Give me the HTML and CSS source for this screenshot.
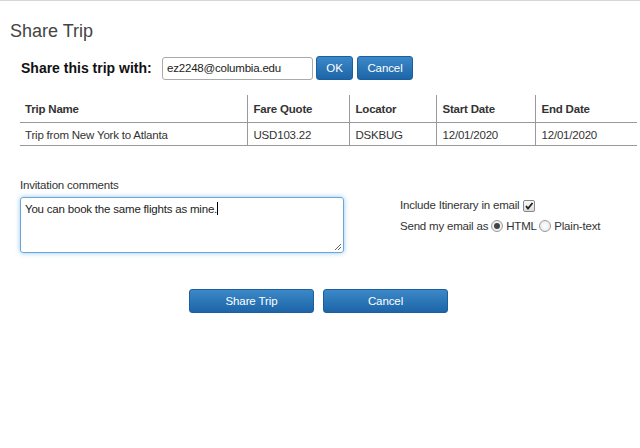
FILE: index.html
```html
<!DOCTYPE html>
<html>
<head>
<meta charset="utf-8">
<link rel="stylesheet" href="styles.css">
</head>
<body>
<div class="page">
  <h1 class="title">Share Trip</h1>
  <div class="share-row">
    <span class="share-label">Share this trip with:</span>
    <div class="email-input">ez2248@columbia.edu</div>
    <button class="btn btn-ok">OK</button>
    <button class="btn btn-cancel-sm">Cancel</button>
  </div>
  <table class="trips">
    <colgroup>
      <col class="c1"><col class="c2"><col class="c3"><col class="c4"><col class="c5">
    </colgroup>
    <thead>
      <tr><th>Trip Name</th><th>Fare Quote</th><th>Locator</th><th>Start Date</th><th>End Date</th></tr>
    </thead>
    <tbody>
      <tr><td>Trip from New York to Atlanta</td><td>USD103.22</td><td>DSKBUG</td><td>12/01/2020</td><td>12/01/2020</td></tr>
    </tbody>
  </table>
  <div class="comments">
    <div class="comments-left">
      <div class="comments-label">Invitation comments</div>
      <div class="textarea">You can book the same flights as mine.<span class="caret"></span>
        <svg class="grip" width="9" height="9" viewBox="0 0 9 9"><path d="M8 2 L2 8 M8 5 L5 8" stroke="#666" stroke-width="1" fill="none"/></svg>
      </div>
    </div>
    <div class="options">
      <div class="opt-line">Include Itinerary in email <span class="checkbox"><svg width="10" height="10" viewBox="0 0 10 10"><path d="M2 5 L4 7.5 L8.5 2" stroke="#222" stroke-width="1.8" fill="none"/></svg></span></div>
      <div class="opt-line">Send my email as <span class="radio checked"></span> HTML <span class="radio"></span> Plain-text</div>
    </div>
  </div>
  <div class="actions">
    <button class="btn btn-big">Share Trip</button>
    <button class="btn btn-big">Cancel</button>
  </div>
</div>
</body>
</html>
```
FILE: styles.css
```css
html, body {
  margin: 0;
  padding: 0;
  background: #fff;
}
body {
  font-family: "Liberation Sans", Arial, sans-serif;
  color: #333;
  border-top: 1px solid #d6d6d6;
}
.page {
  width: 640px;
}
.title {
  margin: 0;
  padding: 20px 0 0 10px;
  font-size: 18px;
  font-weight: normal;
  line-height: 21px;
  color: #444;
}
.share-row {
  display: flex;
  align-items: center;
  margin-top: 14px;
  height: 24px;
}
.share-label {
  font-size: 14px;
  font-weight: bold;
  color: #111;
  margin-left: 21px;
  width: 141px;
}
.email-input {
  width: 145px;
  height: 21px;
  border: 1px solid #aaa;
  border-radius: 3px;
  font-size: 11.5px;
  letter-spacing: -0.2px;
  line-height: 21px;
  padding-left: 4px;
  color: #222;
}
.btn {
  font-family: "Liberation Sans", Arial, sans-serif;
  color: #fff;
  border: 1px solid #1b5f9e;
  border-radius: 3px;
  background: linear-gradient(#3b88c8, #1d65a8);
  font-size: 11.5px;
  letter-spacing: -0.1px;
  font-weight: normal;
  padding: 0;
  height: 24px;
}
.btn-ok {
  margin-left: 3px;
  width: 37px;
}
.btn-cancel-sm {
  margin-left: 4px;
  width: 56px;
}
.trips {
  margin: 15px 0 0 20px;
  border-collapse: collapse;
  table-layout: fixed;
  width: 617px;
  font-size: 11.5px;
  letter-spacing: -0.2px;
  color: #333;
}
.c1 { width: 227px; }
.c2 { width: 102px; }
.c3 { width: 87px; }
.c4 { width: 99px; }
.c5 { width: 102px; }
.trips th, .trips td {
  text-align: left;
  padding: 0 0 0 6px;
  border-left: 1px solid #999;
  border-bottom: 1px solid #999;
  white-space: nowrap;
}
.trips th:first-child, .trips td:first-child {
  border-left: none;
  padding-left: 5px;
}
.trips th {
  font-weight: bold;
  height: 27px;
}
.trips td {
  height: 23px;
  padding-top: 2px;
  box-sizing: border-box;
}
.comments {
  display: flex;
  margin-top: 32px;
}
.comments-left {
  margin-left: 20px;
  width: 324px;
}
.comments-label {
  font-size: 11.5px;
  letter-spacing: -0.2px;
  line-height: 14px;
  color: #333;
}
.textarea {
  position: relative;
  margin-top: 5px;
  box-sizing: border-box;
  width: 324px;
  height: 56px;
  border: 1px solid #6aa7d8;
  border-radius: 3px;
  box-shadow: 0 0 5px rgba(102, 175, 233, 0.7);
  font-size: 11.5px;
  letter-spacing: -0.2px;
  line-height: 14px;
  padding: 4px 4px;
  color: #222;
}
.caret {
  display: inline-block;
  width: 1px;
  height: 13px;
  background: #000;
  vertical-align: -2px;
}
.grip {
  position: absolute;
  right: 1px;
  bottom: 1px;
}
.options {
  margin-left: 56px;
  margin-top: 17px;
  font-size: 11.5px;
  letter-spacing: -0.2px;
  color: #333;
}
.opt-line {
  height: 21px;
  line-height: 21px;
  white-space: nowrap;
}
.checkbox {
  display: inline-flex;
  align-items: center;
  justify-content: center;
  box-sizing: border-box;
  width: 12px;
  height: 12px;
  border: 1px solid #888;
  border-radius: 2px;
  background: linear-gradient(#fafafa, #ddd);
  vertical-align: -2px;
  margin-left: 1px;
}
.radio {
  display: inline-block;
  box-sizing: border-box;
  width: 12px;
  height: 12px;
  border: 1px solid #999;
  border-radius: 50%;
  background: radial-gradient(circle, #fff 0, #e4e4e4 100%);
  position: relative;
  vertical-align: -2px;
}
.radio.checked::after {
  content: "";
  position: absolute;
  left: 2px;
  top: 2px;
  width: 6px;
  height: 6px;
  border-radius: 50%;
  background: #444;
}
.actions {
  display: flex;
  justify-content: center;
  gap: 9px;
  margin-top: 36px;
  padding-right: 3px;
}
.btn-big {
  width: 125px;
  height: 24px;
}
```
